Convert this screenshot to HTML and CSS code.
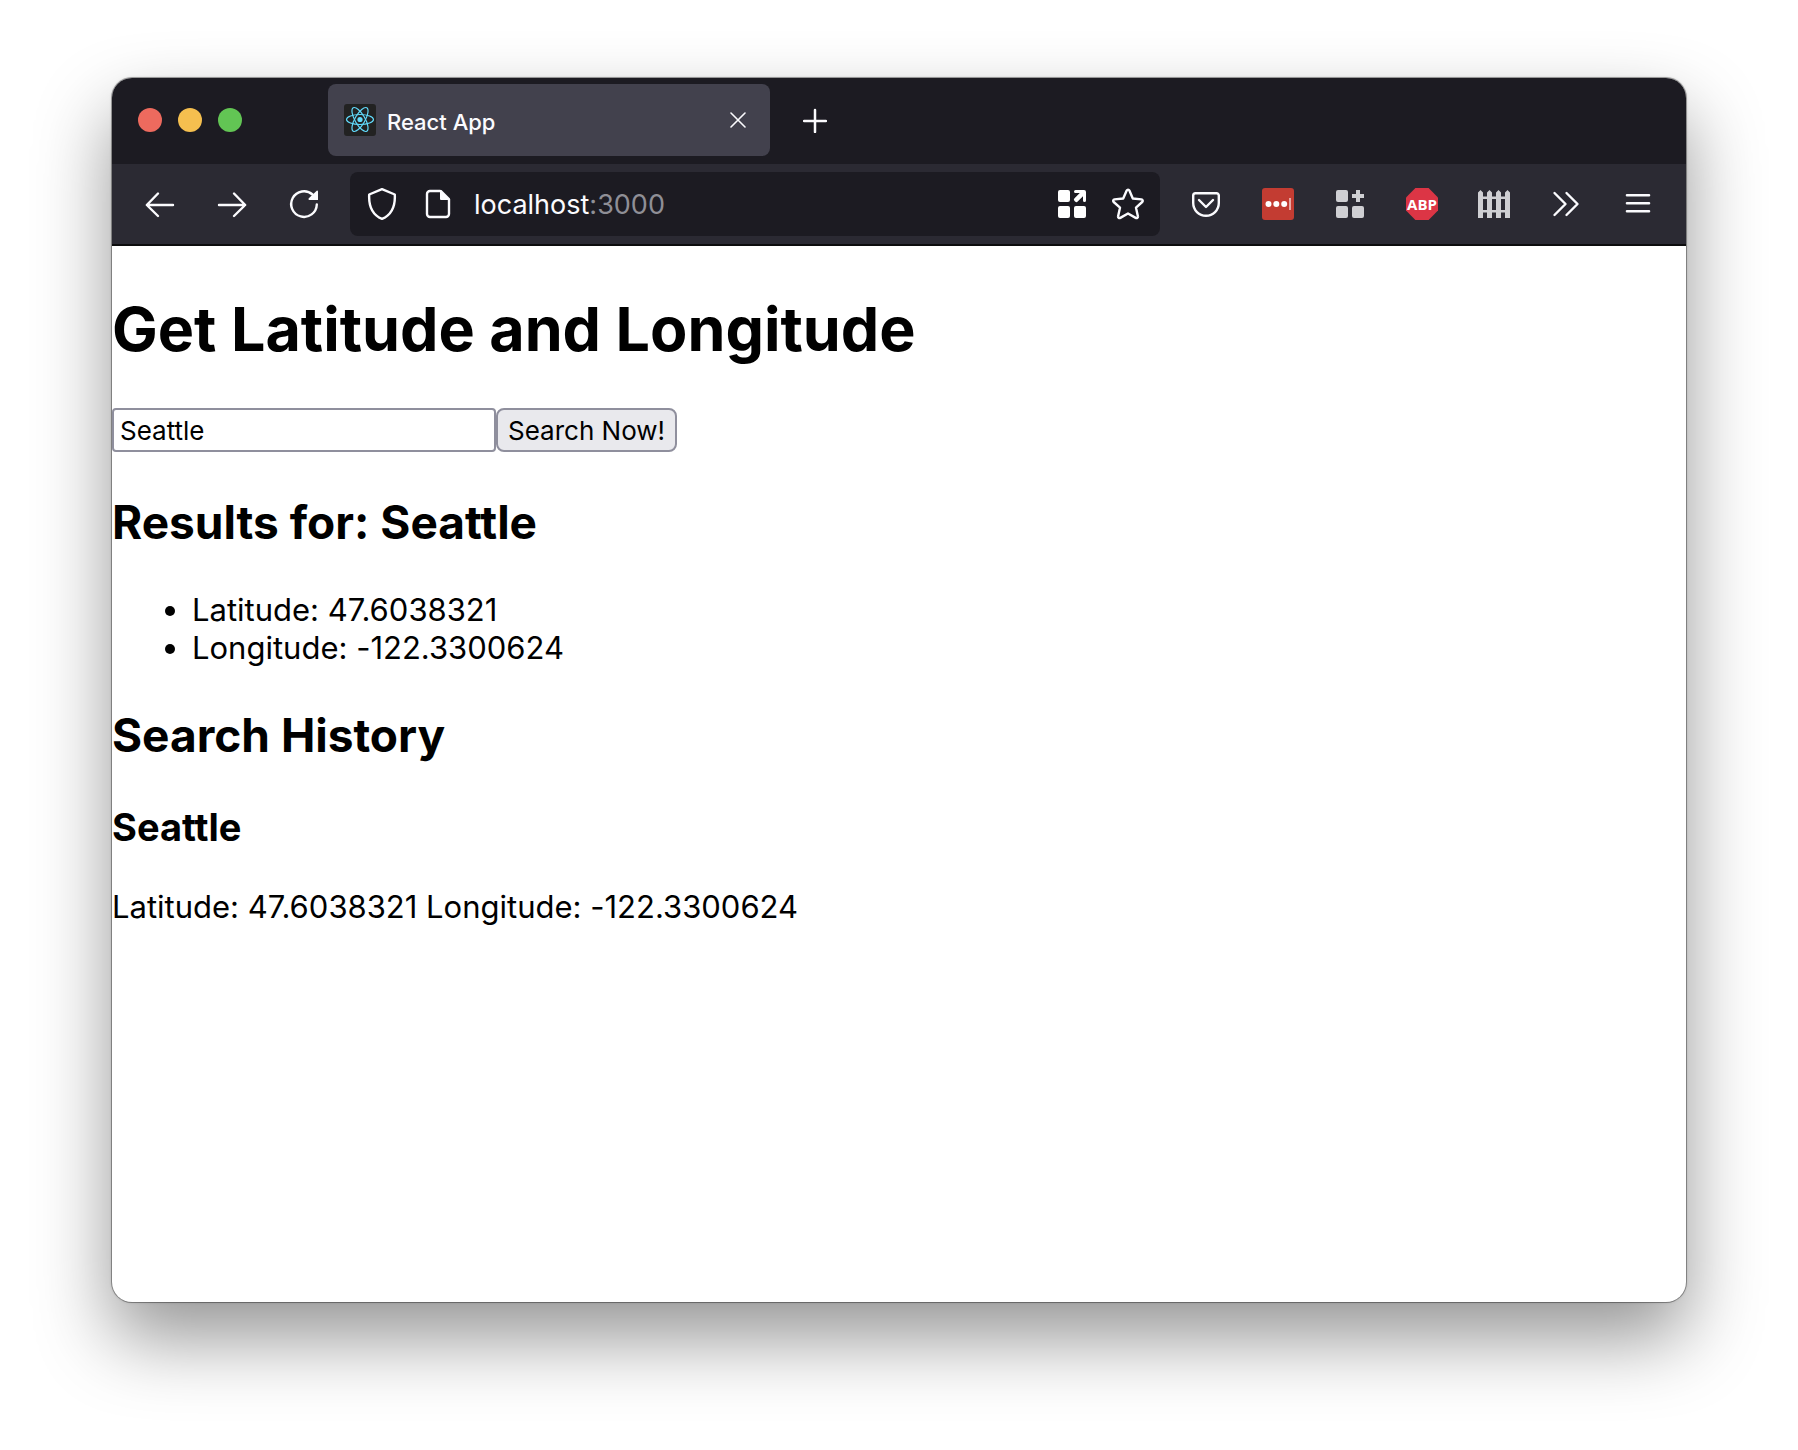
FILE: index.html
```html
<!DOCTYPE html>
<html lang="en">
<head>
<meta charset="utf-8">
<meta name="viewport" content="width=device-width, initial-scale=1">
<title>React App</title>
<link rel="stylesheet" href="styles.css">
</head>
<body>
<div class="window">
  <header class="tabstrip">
    <div class="lights">
      <button class="light light-close" aria-label="Close window"></button>
      <button class="light light-min" aria-label="Minimize window"></button>
      <button class="light light-max" aria-label="Zoom window"></button>
    </div>
    <div class="tab">
      <svg class="favicon" width="32" height="32" viewBox="0 0 32 32" aria-hidden="true">
        <rect width="32" height="32" rx="3" fill="#222"/>
        <g fill="none" stroke="#61dafb" stroke-width="1.2">
          <ellipse cx="16" cy="15.500" rx="13.500" ry="5"/>
          <ellipse cx="16" cy="15.500" rx="13.500" ry="5" transform="rotate(60 16 15.500)"/>
          <ellipse cx="16" cy="15.500" rx="13.500" ry="5" transform="rotate(120 16 15.500)"/>
        </g>
        <circle cx="16" cy="15.500" r="2.600" fill="#61dafb"/>
      </svg>
      <span class="tab-title">React App</span>
      <button class="tab-close" aria-label="Close tab">
        <svg width="16" height="16" viewBox="0 0 16 16"><path d="M1 1l14 14M15 1L1 15" fill="none" stroke="#fbfbfe" stroke-width="1.600" stroke-linecap="round"/></svg>
      </button>
    </div>
    <button class="new-tab" aria-label="New tab">
      <svg width="24" height="26" viewBox="0 0 24 26"><path d="M12 3v22M1 14h22" fill="none" stroke="#fbfbfe" stroke-width="2.500" stroke-linecap="round"/></svg>
    </button>
  </header>

  <nav class="toolbar" aria-label="Browser toolbar">
    <div class="tools">
      <button class="tool" aria-label="Back">
        <svg width="32" height="32" viewBox="0 0 32 32"><path d="M29 17H3M14 5.500L2.800 17 14 28" fill="none" stroke="#fbfbfe" stroke-width="2.400" stroke-linecap="round" stroke-linejoin="round"/></svg>
      </button>
      <button class="tool" aria-label="Forward">
        <svg width="32" height="32" viewBox="0 0 32 32"><path d="M3 17h26M18 5.500L29.200 17 18 28" fill="none" stroke="#fbfbfe" stroke-width="2.400" stroke-linecap="round" stroke-linejoin="round"/></svg>
      </button>
      <button class="tool" aria-label="Reload">
        <svg width="32" height="32" viewBox="0 0 32 32"><path d="M28.800 16.500A12.800 12.800 0 1 1 24.500 6.500" fill="none" stroke="#fbfbfe" stroke-width="2.400" stroke-linecap="round"/><path d="M29 2.500a1 1 0 0 1 1 1V12h-8.500a1 1 0 0 1-.7-1.700z" fill="#fbfbfe"/></svg>
      </button>
    </div>

    <div class="urlbar">
      <button class="url-icon" aria-label="Tracking protection">
        <svg width="32" height="32" viewBox="0 0 32 32"><path d="M16 1.200L28.800 6.500C29.300 16 27.500 26 16 30.800 4.500 26 2.700 16 3.200 6.500z" fill="none" stroke="#fbfbfe" stroke-width="2.400" stroke-linejoin="round"/></svg>
      </button>
      <button class="url-icon" aria-label="Site information">
        <svg width="32" height="32" viewBox="0 0 32 32"><path d="M18.500 3H8a3 3 0 0 0-3 3v20a3 3 0 0 0 3 3h16a3 3 0 0 0 3-3V11" fill="none" stroke="#fbfbfe" stroke-width="2.400"/><path d="M18 2h1.500L28 10.500V12H19a1 1 0 0 1-1-1z" fill="#fbfbfe"/></svg>
      </button>
      <div class="address"><span class="host">localhost</span>:3000</div>
      <button class="url-icon" aria-label="Open extension">
        <svg width="32" height="32" viewBox="0 0 32 32" fill="#fff"><rect x="2" y="2" width="12" height="12" rx="2"/><rect x="2" y="18" width="12" height="12" rx="2"/><rect x="18" y="18" width="12" height="12" rx="2"/><path d="M19.500 2H28a2 2 0 0 1 2 2v8.500a1.500 1.500 0 0 1-3 0V8.200l-5.300 5.300a1.800 1.800 0 0 1-2.600 0l-.6-.6a1.800 1.800 0 0 1 0-2.600L23.800 5h-4.300a1.500 1.500 0 0 1 0-3z"/></svg>
      </button>
      <button class="url-icon" aria-label="Bookmark this page">
        <svg width="32" height="32" viewBox="0 0 32 32"><path d="M14.700 2.500a1.500 1.500 0 0 1 2.700 0L20.800 10.500l8.600.9a1.500 1.500 0 0 1 .8 2.600L24 19.700l1.900 8.500a1.500 1.500 0 0 1-2.200 1.700L16 25.500l-7.700 4.400a1.500 1.500 0 0 1-2.200-1.700L8 19.700 1.700 14a1.500 1.500 0 0 1 .8-2.600l8.700-.9z" fill="none" stroke="#fbfbfe" stroke-width="2.400" stroke-linejoin="round"/></svg>
      </button>
    </div>

    <div class="tools">
      <button class="tool" aria-label="Save to Pocket">
        <svg width="32" height="32" viewBox="0 0 32 32" fill="none" stroke="#fbfbfe" stroke-width="2.400" stroke-linecap="round" stroke-linejoin="round"><path d="M5.500 5.200h21a2.300 2.300 0 0 1 2.300 2.300V15a12.800 12.800 0 0 1-25.600 0V7.500a2.300 2.300 0 0 1 2.300-2.300z"/><path d="M9 12l7 7 7-7"/></svg>
      </button>
      <button class="tool" aria-label="Password manager">
        <svg width="32" height="32" viewBox="0 0 32 32"><rect width="32" height="32" rx="3" fill="#c33c32"/><g fill="#fff"><circle cx="6.500" cy="16" r="3"/><circle cx="14.300" cy="16" r="3"/><circle cx="22.200" cy="16" r="3"/></g><path d="M28 10v12" stroke="#f0c4c1" stroke-width="1.600"/></svg>
      </button>
      <button class="tool" aria-label="Extensions">
        <svg width="32" height="32" viewBox="0 0 32 32" fill="#cfcfd3"><rect x="2" y="2" width="12" height="12" rx="2"/><rect x="2" y="18" width="12" height="12" rx="2"/><rect x="18" y="18" width="12" height="12" rx="2"/><path d="M22 2h4v4h4v4h-4v4h-4v-4h-4V6h4z"/></svg>
      </button>
      <button class="tool" aria-label="Adblock Plus">
        <svg width="32" height="32" viewBox="0 0 32 32"><path d="M9.400 0h13.200L32 9.400v13.200L22.600 32H9.400L0 22.600V9.400z" fill="#dc3545"/><text class="abp" x="16" y="22" text-anchor="middle">ABP</text></svg>
      </button>
      <button class="tool" aria-label="Fence">
        <svg width="32" height="32" viewBox="0 0 32 32" fill="#cfcfd3"><path d="M0 30V4.500L2.500 2 5 4.500V30zM9 30V4.500L11.500 2 14 4.500V30zM18 30V4.500L20.500 2 23 4.500V30zM27 30V4.500L29.500 2 32 4.500V30z"/><path d="M0 8.500h32v2.500H0zM0 22h32v2.500H0z"/></svg>
      </button>
      <button class="tool" aria-label="More tools">
        <svg width="32" height="32" viewBox="0 0 32 32"><path d="M4.500 5L15.500 16 4.500 27M16.500 5l11 11-11 11" fill="none" stroke="#fbfbfe" stroke-width="2.400" stroke-linecap="round" stroke-linejoin="round"/></svg>
      </button>
      <button class="tool" aria-label="Menu">
        <svg width="32" height="32" viewBox="0 0 32 32"><path d="M5 7.300h22M5 15.300h22M5 23.300h22" fill="none" stroke="#fbfbfe" stroke-width="2.600" stroke-linecap="round"/></svg>
      </button>
    </div>
  </nav>

  <main class="page">
    <h1 class="title">Get Latitude and Longitude</h1>
    <form class="search">
      <input class="query" type="text" value="Seattle" aria-label="Location">
      <button class="submit" type="button">Search Now!</button>
    </form>
    <h2 class="heading">Results for: Seattle</h2>
    <ul class="results">
      <li>Latitude: 47.6038321</li>
      <li>Longitude: -122.3300624</li>
    </ul>
    <h2 class="heading">Search History</h2>
    <h3 class="place">Seattle</h3>
    <p class="coords">Latitude: 47.6038321 Longitude: -122.3300624</p>
  </main>
</div>
</body>
</html>
```
FILE: styles.css
```css
* {
  box-sizing: border-box;
}

body {
  margin: 0;
  min-height: 100vh;
  display: flex;
  padding: 78px 112px 148px;
  background: #fff;
  color: #000;
  font-family: Inter, "Liberation Sans", sans-serif;
  font-variant-ligatures: none;
}

button {
  margin: 0;
  padding: 0;
  border: 0;
  background: none;
  color: inherit;
  font: inherit;
}

svg {
  display: block;
}

.window {
  flex: 1;
  min-width: 0;
  display: flex;
  flex-direction: column;
  overflow: hidden;
  border-radius: 20px;
  background: #fff;
  box-shadow: 0 0 0 1px rgba(0, 0, 0, 0.3), 0 0 3px rgba(0, 0, 0, 0.25), 0 36px 76px rgba(0, 0, 0, 0.42);
}

/* Tab strip */
.tabstrip {
  display: flex;
  align-items: center;
  height: 86px;
  padding: 0 26px 2px;
  background: #1c1b22;
}

.lights {
  display: flex;
  gap: 16px;
  margin-right: 86px;
}

.light {
  width: 24px;
  height: 24px;
  border-radius: 50%;
}

.light-close {
  background: #ed6a5e;
}

.light-min {
  background: #f5bf4f;
}

.light-max {
  background: #62c554;
}

.tab {
  display: flex;
  align-items: center;
  width: 442px;
  height: 72px;
  padding: 0 24px 0 16px;
  border-radius: 8px;
  background: #42414d;
  color: #fbfbfe;
}

.tab-title {
  flex: 1;
  padding: 4px 0 0 11px;
  font-size: 22px;
  line-height: 28px;
  font-weight: 500;
}

.new-tab {
  margin-left: 33px;
}

/* Toolbar */
.toolbar {
  display: flex;
  align-items: center;
  gap: 10px;
  height: 82px;
  padding: 0 12px;
  border-bottom: 2px solid #0c0c0d;
  background: #2b2a33;
}

.tools {
  display: flex;
}

.tool,
.url-icon {
  display: flex;
  align-items: center;
  justify-content: center;
  height: 64px;
}

.tool {
  width: 72px;
}

.url-icon {
  width: 56px;
}

.urlbar {
  flex: 1;
  min-width: 0;
  display: flex;
  align-items: center;
  height: 64px;
  padding: 0 4px;
  border-radius: 8px;
  background: #1c1b22;
}

.address {
  flex: 1;
  padding: 2px 0 0 8px;
  color: #8f8f96;
  font-size: 27px;
  line-height: 36px;
}

.host {
  color: #fbfbfe;
}

.abp {
  fill: #fff;
  font-family: "Open Sans", sans-serif;
  font-size: 15px;
  font-weight: 700;
}

/* Page content */
.page {
  flex: 1;
  font-size: 31px;
  line-height: 38px;
}

.title {
  margin: 43px 0 39px;
  font-size: 61px;
  line-height: 80px;
}

.search {
  display: flex;
}

.query,
.submit {
  height: 44px;
  border: 2px solid #8f8f9d;
  color: #000;
  font-family: inherit;
  font-size: 26px;
  line-height: 32px;
}

.query {
  width: 384px;
  padding: 1px 6px 0;
  border-radius: 4px;
  background: #fff;
}

.submit {
  padding: 1px 10px 0;
  border-radius: 8px;
  background: #e9e9ed;
}

.heading {
  margin: 40px 0;
  font-size: 46px;
  line-height: 57px;
}

.search + .heading {
  margin-top: 42px;
}

.results {
  margin: 0;
  padding-left: 80px;
}

.place {
  margin: 40px 0 38px;
  font-size: 38px;
  line-height: 46px;
}

.coords {
  margin: 0;
}
```
